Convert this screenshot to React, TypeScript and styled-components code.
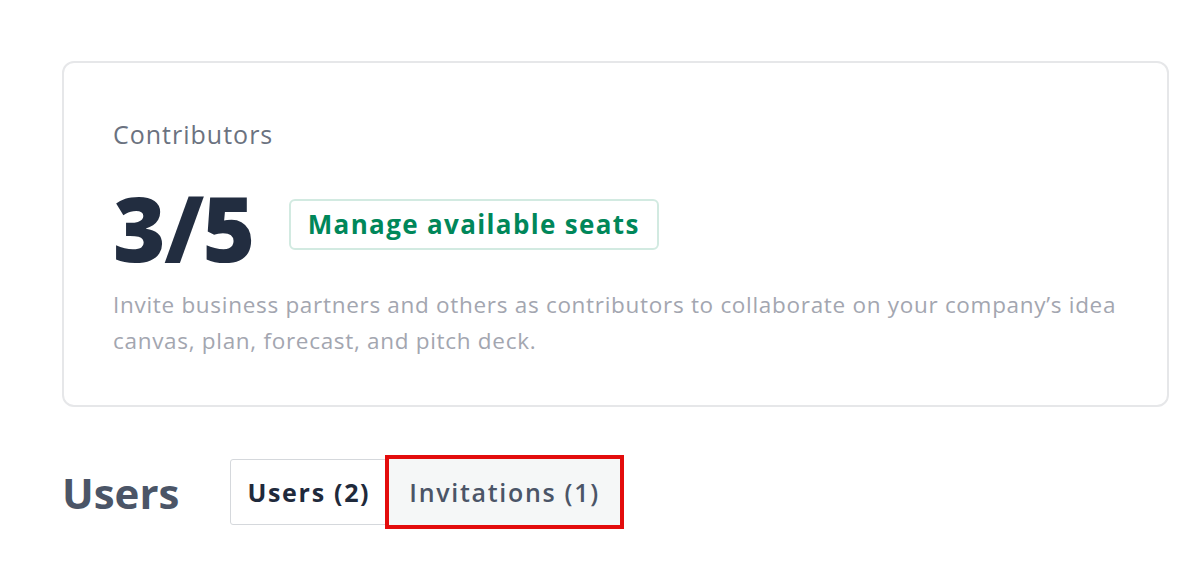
import React from "react"
import styled, { createGlobalStyle } from "styled-components"

const GlobalStyle = createGlobalStyle`
  body {
    margin: 0;
    background: #ffffff;
    font-family: "Open Sans", "Liberation Sans", sans-serif;
  }
`

const tabs = [
  { label: "Users (2)", active: false },
  { label: "Invitations (1)", active: true },
]

export default function App() {
  return (
    <>
      <GlobalStyle />
      <Page>
        <SeatsCard>
          <Label>Contributors</Label>
          <SeatsRow>
            <SeatCount>3/5</SeatCount>
            <ManageButton>Manage available seats</ManageButton>
          </SeatsRow>
          <Description>
            Invite business partners and others as contributors to collaborate on your company’s idea
            canvas, plan, forecast, and pitch deck.
          </Description>
        </SeatsCard>

        <UsersHeader>
          <Heading>Users</Heading>
          <TabGroup>
            {tabs.map((tab) => (
              <Tab key={tab.label} $active={tab.active}>
                {tab.label}
              </Tab>
            ))}
          </TabGroup>
        </UsersHeader>
      </Page>
    </>
  )
}

const Page = styled.div`
  box-sizing: border-box;
  min-height: 100vh;
  padding: 61px 33px 40px 62px;
  display: flex;
  flex-direction: column;
  gap: 52px;
`

const SeatsCard = styled.section`
  box-sizing: border-box;
  width: 1107px;
  height: 346px;
  border: 2px solid #e6e7e9;
  border-radius: 12px;
  padding: 56px 40px 0 49px;
`

const Label = styled.div`
  font-size: 25px;
  line-height: 30px;
  letter-spacing: 1px;
  color: #6b7280;
`

const SeatsRow = styled.div`
  display: flex;
  align-items: center;
  gap: 35px;
  margin-top: 33px;
`

const SeatCount = styled.div`
  font-size: 90px;
  font-weight: 800;
  line-height: 90px;
  letter-spacing: -1.5px;
  color: #222d40;
`

const ManageButton = styled.button`
  box-sizing: border-box;
  height: 51px;
  padding: 0 17px;
  background: #ffffff;
  border: 2px solid #d2eae1;
  border-radius: 6px;
  font-family: inherit;
  font-size: 26px;
  font-weight: 700;
  letter-spacing: 1.35px;
  color: #00875a;
  margin-bottom: 6px;
`

const Description = styled.p`
  margin: 15px 0 0;
  font-size: 22.5px;
  line-height: 36px;
  letter-spacing: 0.7px;
  color: #a3a6b0;
`

const UsersHeader = styled.div`
  display: flex;
  align-items: center;
  gap: 51px;
`

const Heading = styled.h2`
  margin: 0;
  font-size: 42px;
  font-weight: 700;
  color: #4b5567;
`

const TabGroup = styled.div`
  display: flex;
  height: 66px;
`

const Tab = styled.button<{ $active: boolean }>`
  box-sizing: border-box;
  height: 100%;
  padding: 0 ${(p) => (p.$active ? "20px" : "16px")};
  font-family: inherit;
  font-size: 25px;
  font-weight: ${(p) => (p.$active ? 600 : 700)};
  letter-spacing: 1.7px;
  color: ${(p) => (p.$active ? "#4b5567" : "#1f2a3c")};
  background: ${(p) => (p.$active ? "#f5f7f7" : "#ffffff")};
  border: ${(p) => (p.$active ? "none" : "1.5px solid #d5d8dc")};
  border-radius: ${(p) => (p.$active ? "0" : "3px 0 0 3px")};
  box-shadow: ${(p) => (p.$active ? "0 0 0 4px #e30c0c" : "none")};
  margin-left: ${(p) => (p.$active ? "2px" : "0")};
`
